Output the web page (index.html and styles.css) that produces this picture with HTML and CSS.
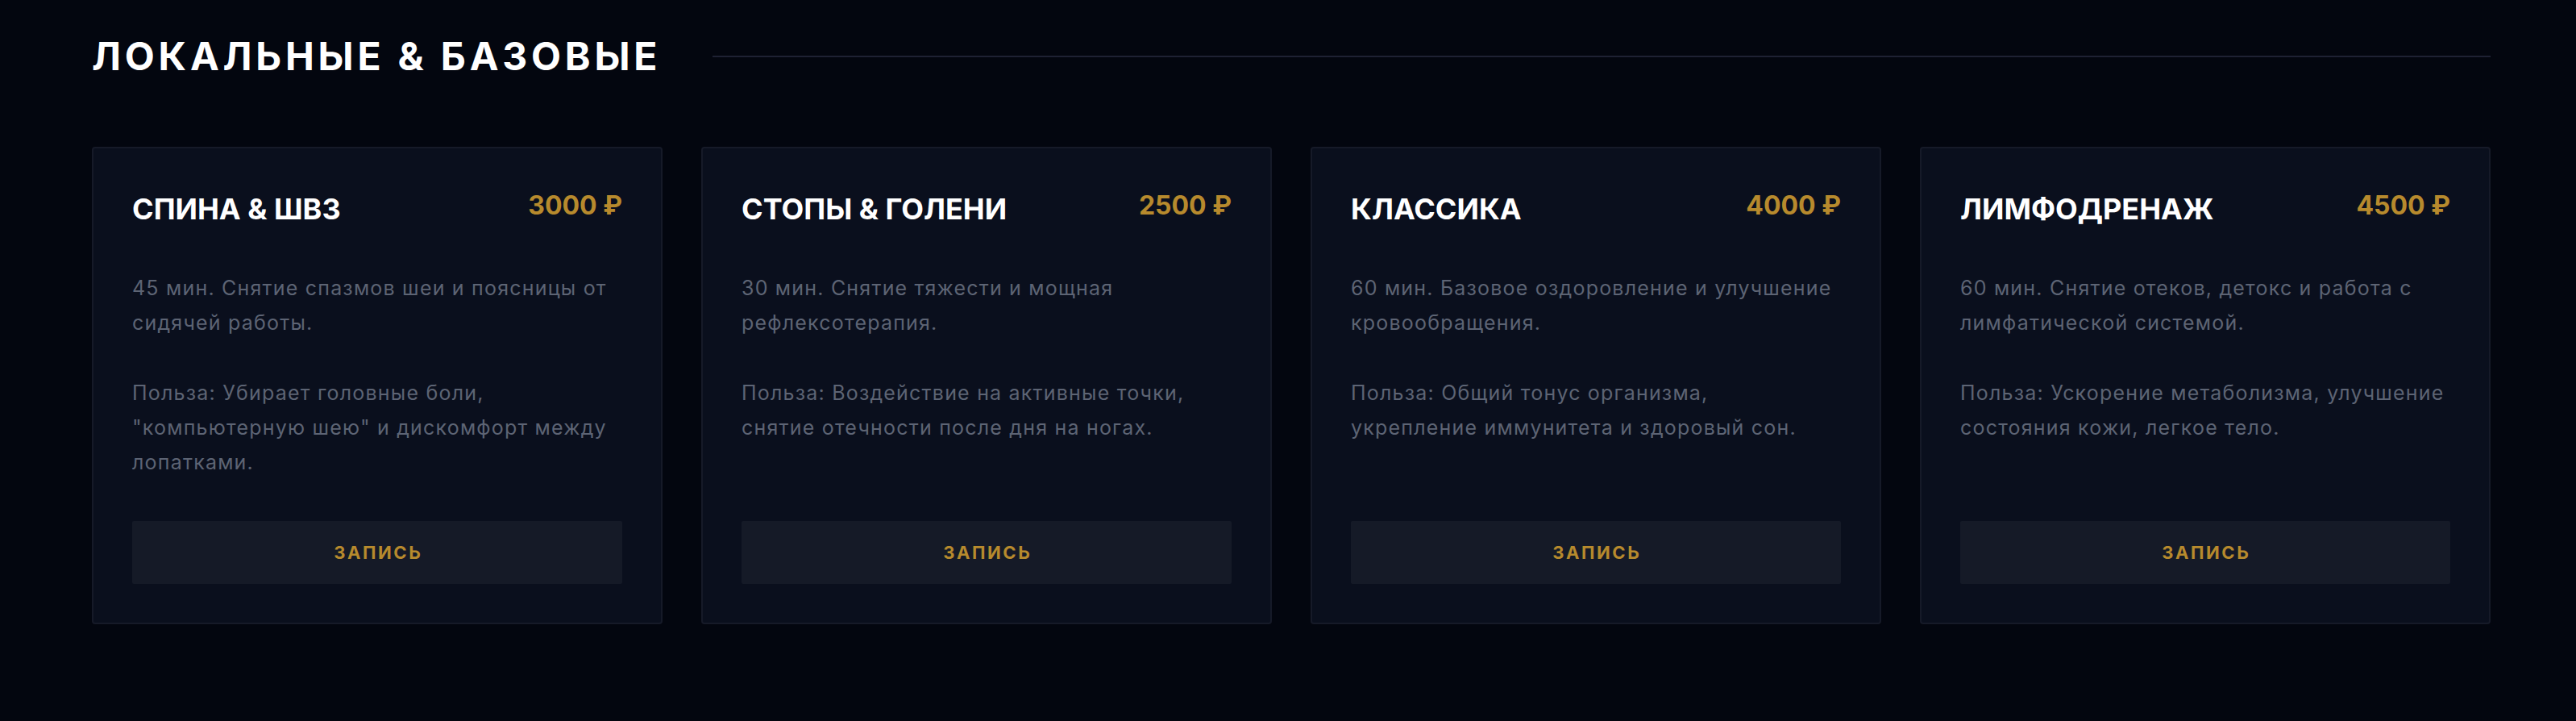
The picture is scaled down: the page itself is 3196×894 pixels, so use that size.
FILE: index.html
```html
<!DOCTYPE html>
<html lang="ru">
<head>
<meta charset="utf-8">
<title>Локальные & базовые</title>
<link rel="stylesheet" href="styles.css">
</head>
<body>
<section class="section">
  <div class="section-head">
    <h2 class="section-title">ЛОКАЛЬНЫЕ &amp; БАЗОВЫЕ</h2>
    <div class="section-line"></div>
  </div>
  <div class="cards">
    <article class="card">
      <div class="card-head">
        <h3 class="card-title">СПИНА &amp; ШВЗ</h3>
        <span class="card-price">3000 ₽</span>
      </div>
      <div class="card-text">
        <p>45 мин. Снятие спазмов шеи и поясницы от сидячей работы.</p>
        <p>Польза: Убирает головные боли, "компьютерную шею" и дискомфорт между лопатками.</p>
      </div>
      <button class="card-btn">ЗАПИСЬ</button>
    </article>
    <article class="card">
      <div class="card-head">
        <h3 class="card-title">СТОПЫ &amp; ГОЛЕНИ</h3>
        <span class="card-price">2500 ₽</span>
      </div>
      <div class="card-text">
        <p>30 мин. Снятие тяжести и мощная рефлексотерапия.</p>
        <p>Польза: Воздействие на активные точки, снятие отечности после дня на ногах.</p>
      </div>
      <button class="card-btn">ЗАПИСЬ</button>
    </article>
    <article class="card">
      <div class="card-head">
        <h3 class="card-title">КЛАССИКА</h3>
        <span class="card-price">4000 ₽</span>
      </div>
      <div class="card-text">
        <p>60 мин. Базовое оздоровление и улучшение кровообращения.</p>
        <p>Польза: Общий тонус организма, укрепление иммунитета и здоровый сон.</p>
      </div>
      <button class="card-btn">ЗАПИСЬ</button>
    </article>
    <article class="card">
      <div class="card-head">
        <h3 class="card-title">ЛИМФОДРЕНАЖ</h3>
        <span class="card-price">4500 ₽</span>
      </div>
      <div class="card-text">
        <p>60 мин. Снятие отеков, детокс и работа с лимфатической системой.</p>
        <p>Польза: Ускорение метаболизма, улучшение состояния кожи, легкое тело.</p>
      </div>
      <button class="card-btn">ЗАПИСЬ</button>
    </article>
  </div>
</section>
</body>
</html>
```
FILE: styles.css
```css
* { box-sizing: border-box; }

html, body {
  margin: 0;
  padding: 0;
  background: #03060f;
  font-family: Inter, "Noto Sans", "Liberation Sans", sans-serif;
}

.section {
  padding: 41px 106px 60px 114px;
}

.section-head {
  display: flex;
  align-items: center;
  gap: 64px;
  margin-bottom: 83px;
}

.section-title {
  margin: 0;
  font-size: 48px;
  line-height: 58px;
  font-weight: 700;
  letter-spacing: 0.1em;
  color: #ffffff;
  white-space: nowrap;
}

.section-line {
  flex: 1;
  height: 2px;
  background: #1e2133;
}

.cards {
  display: grid;
  grid-template-columns: repeat(4, 1fr);
  gap: 48px;
}

.card {
  display: flex;
  flex-direction: column;
  background: #0a0f1d;
  border: 2px solid #161a28;
  border-radius: 4px;
  padding: 48px 48px 48px;
}

.card-head {
  display: flex;
  justify-content: space-between;
  align-items: flex-start;
  gap: 24px;
}

.card-title {
  margin: 0;
  font-size: 36px;
  line-height: 54px;
  font-weight: 700;
  color: #ffffff;
}

.card-price {
  font-size: 32px;
  line-height: 46px;
  font-weight: 700;
  color: #b78a2d;
  white-space: nowrap;
}

.card-text {
  margin-top: 50px;
  margin-bottom: 51px;
  color: #5d6474;
  font-size: 25px;
  line-height: 43.2px;
  letter-spacing: 1.2px;
}

.card-text p {
  margin: 0;
}

.card-text p + p {
  margin-top: 43.2px;
}

.card-btn {
  margin-top: auto;
  height: 78px;
  width: 100%;
  border: none;
  border-radius: 2px;
  background: #151a27;
  color: #b78a2d;
  font-family: inherit;
  font-size: 22px;
  font-weight: 700;
  letter-spacing: 2.6px;
  padding: 0 0 0 2.6px;
}
```
